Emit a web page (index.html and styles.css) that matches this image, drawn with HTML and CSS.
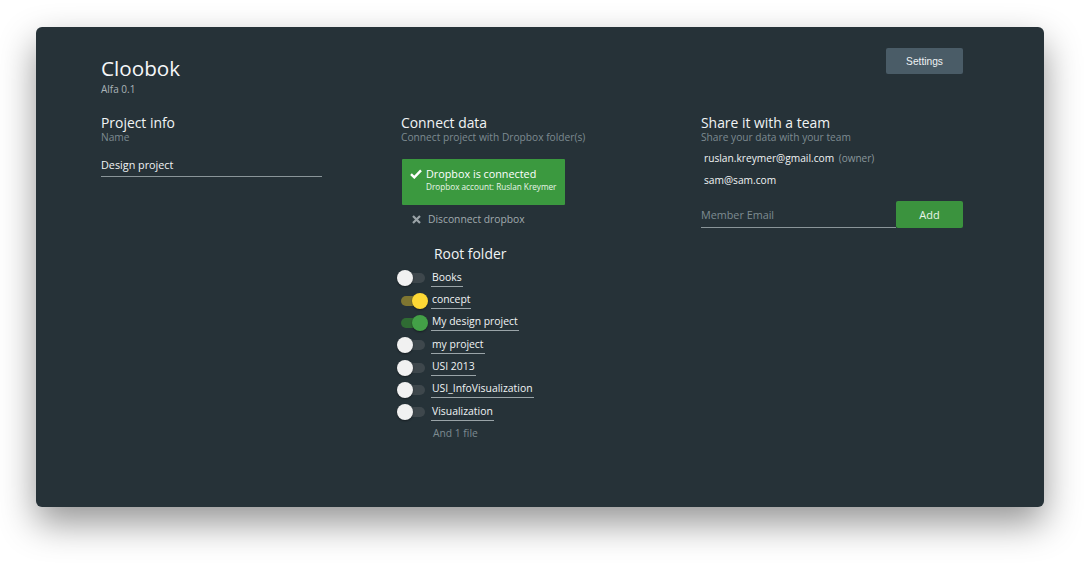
FILE: index.html
```html
<!DOCTYPE html>
<html>
<head>
<meta charset="utf-8">
<link rel="stylesheet" href="styles.css">
</head>
<body>
<div class="window">
  <header class="top">
    <div class="brand">
      <div class="brand-title">Cloobok</div>
      <div class="brand-version">Alfa 0.1</div>
    </div>
    <button class="settings">Settings</button>
  </header>
  <div class="columns">
    <section class="col">
      <h2 class="col-title">Project info</h2>
      <div class="col-sub">Name</div>
      <div class="field">Design project</div>
    </section>
    <section class="col">
      <h2 class="col-title">Connect data</h2>
      <div class="col-sub">Connect project with Dropbox folder(s)</div>
      <div class="dropbox">
        <div class="dropbox-main">
          <svg class="check" width="12" height="10" viewBox="0 0 12 10"><path d="M1 5.2 L4.3 8.4 L11 1.4" fill="none" stroke="#fff" stroke-width="2.4"/></svg>
          Dropbox is connected
        </div>
        <div class="dropbox-acc">Dropbox account: Ruslan Kreymer</div>
      </div>
      <div class="disconnect">
        <svg width="9" height="9" viewBox="0 0 9 9"><path d="M1 1 L8 8 M8 1 L1 8" stroke="#9aa3a7" stroke-width="2.2"/></svg>
        Disconnect dropbox
      </div>
      <h3 class="root-title">Root folder</h3>
      <ul class="folders">
        <li class="folder"><span class="toggle"></span><span class="fname">Books</span></li>
        <li class="folder"><span class="toggle on-yellow"></span><span class="fname">concept</span></li>
        <li class="folder"><span class="toggle on-green"></span><span class="fname">My design project</span></li>
        <li class="folder"><span class="toggle"></span><span class="fname">my project</span></li>
        <li class="folder"><span class="toggle"></span><span class="fname">USI 2013</span></li>
        <li class="folder"><span class="toggle"></span><span class="fname">USI_InfoVisualization</span></li>
        <li class="folder"><span class="toggle"></span><span class="fname">Visualization</span></li>
      </ul>
      <div class="more">And 1 file</div>
    </section>
    <section class="col">
      <h2 class="col-title">Share it with a team</h2>
      <div class="col-sub">Share your data with your team</div>
      <div class="member">ruslan.kreymer@gmail.com <span class="owner">(owner)</span></div>
      <div class="member">sam@sam.com</div>
      <div class="add-row">
        <div class="email-input">Member Email</div>
        <button class="add">Add</button>
      </div>
    </section>
  </div>
</div>
</body>
</html>
```

FILE: styles.css
```css
* { box-sizing: border-box; }
html, body { margin: 0; padding: 0; background: #fff; }
body {
  font-family: "Open Sans", "Noto Sans", sans-serif;
  color: #eceff1;
  width: 1085px;
  height: 578px;
  overflow: hidden;
}
.window {
  margin: 27px 0 0 36px;
  width: 1008px;
  height: 480px;
  background: #263238;
  border-radius: 6px;
  box-shadow: 0 16px 36px rgba(0, 0, 0, 0.42);
  padding: 21px 81px 0 65px;
}
.top {
  display: flex;
  justify-content: space-between;
  align-items: flex-start;
}
.brand { padding-top: 6px; }
.brand-title {
  font-size: 20.7px;
  line-height: 29px;
  color: #f5f7f8;
}
.brand-version {
  font-size: 10px;
  line-height: 12px;
  color: #aab4b8;
  margin-top: 0;
}
.settings {
  width: 77px;
  height: 26px;
  border: 0;
  border-radius: 2px;
  background: #4a5c67;
  color: #eef2f4;
  font-family: "Liberation Sans", Arial, sans-serif;
  font-size: 10.2px;
  padding: 0;
}
.columns {
  display: grid;
  grid-template-columns: 300px 300px 262px;
  margin-top: 19px;
}
.col-title {
  margin: 0;
  font-weight: normal;
  font-size: 13.9px;
  line-height: 17px;
  color: #f1f4f5;
}
.col-sub {
  font-size: 10.2px;
  line-height: 12px;
  color: #7d8b91;
}
.field {
  margin-top: 14px;
  width: 221px;
  font-size: 10.8px;
  line-height: 15px;
  padding-bottom: 4px;
  border-bottom: 1px solid #8a9599;
  color: #f1f4f5;
}
.dropbox {
  margin: 16px 0 0 1px;
  width: 163px;
  height: 46px;
  background: #3b993f;
  border-radius: 1px;
  padding: 8px 0 0 8px;
}
.dropbox-main {
  display: flex;
  align-items: center;
  gap: 4px;
  font-size: 10.8px;
  line-height: 14px;
  color: #fff;
}
.check { flex: none; }
.dropbox-acc {
  font-size: 8.2px;
  line-height: 12px;
  margin-left: 16px;
  color: #e8f5e9;
}
.disconnect {
  display: flex;
  align-items: center;
  gap: 7px;
  margin: 7px 0 0 11px;
  font-size: 10.3px;
  line-height: 14px;
  color: #a1aaae;
}
.root-title {
  margin: 19px 0 0 33px;
  font-weight: normal;
  font-size: 13.9px;
  line-height: 17px;
  color: #f1f4f5;
}
.folders {
  list-style: none;
  margin: 5px 0 0 0;
  padding: 0;
}
.folder {
  display: flex;
  align-items: center;
  height: 22.35px;
  margin-left: -4px;
}
.toggle {
  position: relative;
  width: 30px;
  height: 18px;
  flex: none;
}
.toggle::before {
  content: "";
  position: absolute;
  left: 7px;
  top: 4px;
  width: 21px;
  height: 10px;
  border-radius: 5px;
  background: #3e474c;
}
.toggle::after {
  content: "";
  position: absolute;
  left: 0;
  top: 1px;
  width: 16px;
  height: 16px;
  border-radius: 50%;
  background: #f1f1f1;
  box-shadow: 0 1px 2px rgba(0,0,0,0.4);
}
.toggle.on-yellow::before { left: 4px; background: #7f7631; }
.toggle.on-yellow::after { left: 15px; background: #fdd835; }
.toggle.on-green::before { left: 4px; background: #2f6b33; }
.toggle.on-green::after { left: 15px; background: #43a047; }
.fname {
  margin-left: 4px;
  font-size: 10.4px;
  line-height: 14px;
  padding: 0 1px 2px 1px;
  border-bottom: 1px solid #9aa4a8;
  color: #f1f4f5;
}
.more {
  margin: 3px 0 0 32px;
  font-size: 10.3px;
  line-height: 14px;
  color: #7d8b91;
}
.member {
  margin: 8px 0 0 3px;
  font-size: 10.2px;
  line-height: 14px;
  color: #f1f4f5;
}
.member + .member { margin-top: 8px; }
.owner { color: #8a979c; font-size: 10px; margin-left: 2px; }
.add-row {
  display: flex;
  align-items: flex-end;
  margin-top: 14px;
}
.email-input {
  width: 195px;
  font-size: 10.8px;
  line-height: 14px;
  color: #7d8b91;
  padding-bottom: 5px;
  border-bottom: 1px solid #8a9599;
}
.add {
  width: 67px;
  height: 27px;
  border: 0;
  border-radius: 2px;
  background: #3b933e;
  color: #e8f5e9;
  font-family: "Open Sans", sans-serif;
  font-size: 11px;
  padding: 0;
}
```
